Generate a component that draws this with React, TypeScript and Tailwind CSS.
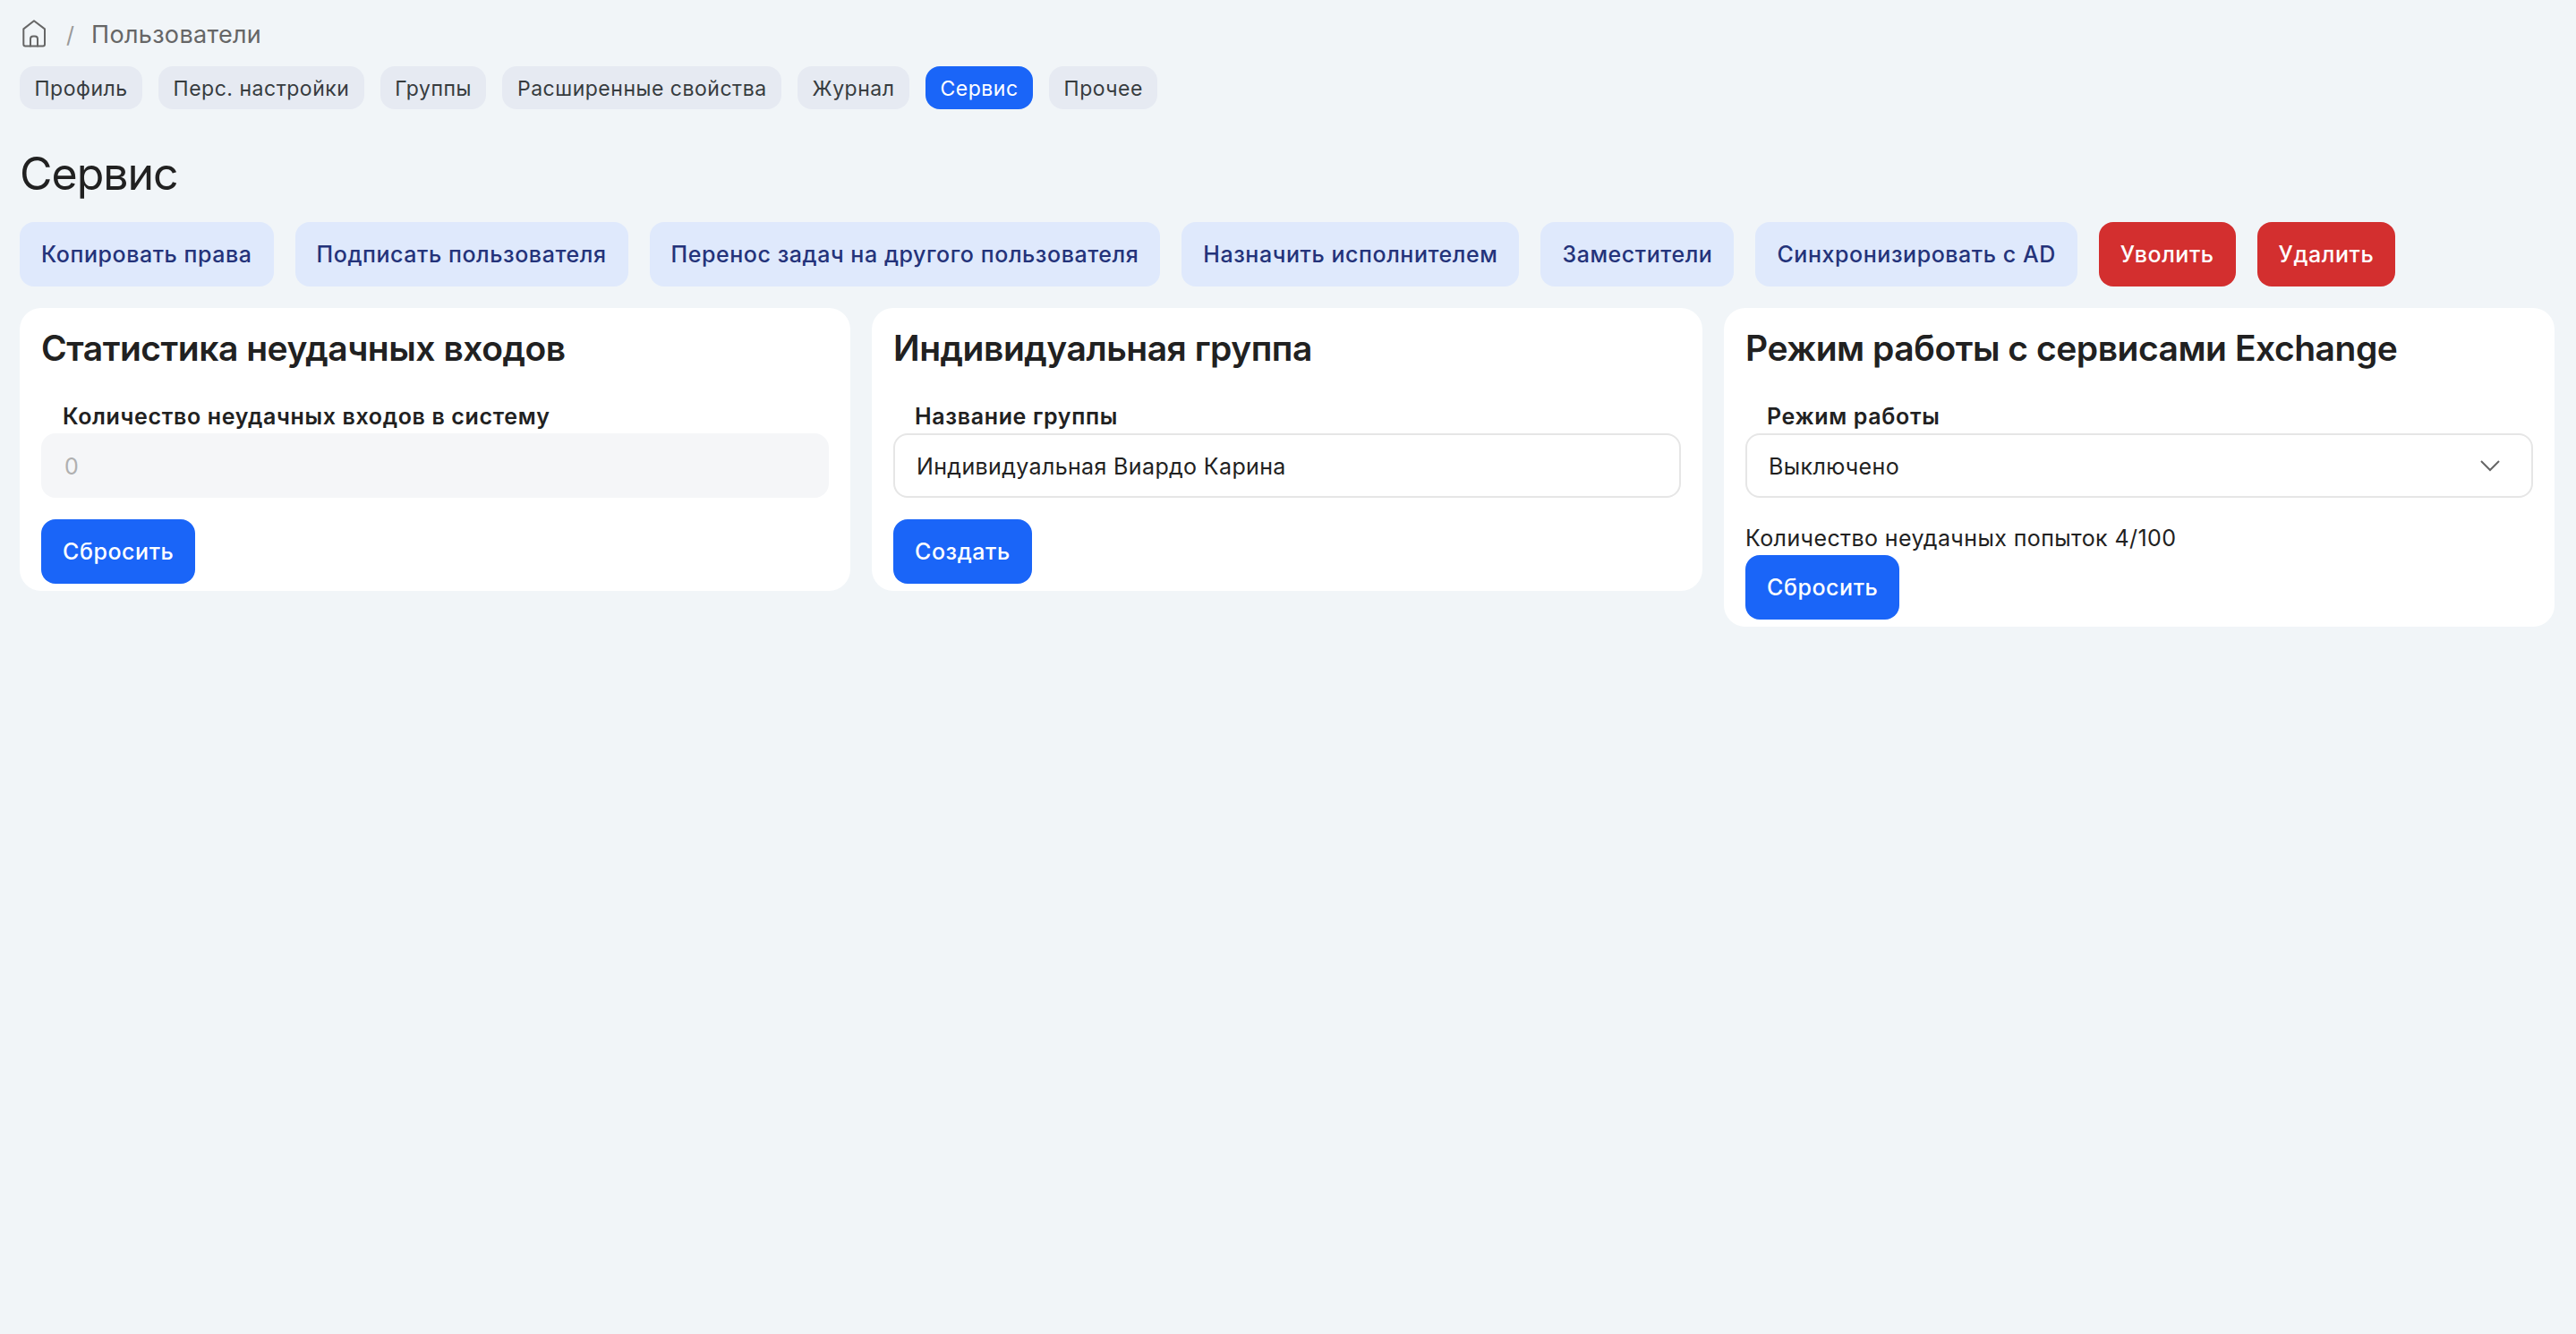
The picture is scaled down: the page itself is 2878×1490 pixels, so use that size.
import React, { useState } from "react";
import clsx from "clsx";

const tabs = [
  "Профиль",
  "Перс. настройки",
  "Группы",
  "Расширенные свойства",
  "Журнал",
  "Сервис",
  "Прочее",
];

const actions = [
  { label: "Копировать права" },
  { label: "Подписать пользователя" },
  { label: "Перенос задач на другого пользователя" },
  { label: "Назначить исполнителем" },
  { label: "Заместители" },
  { label: "Синхронизировать с AD" },
  { label: "Уволить", danger: true },
  { label: "Удалить", danger: true },
];

function HomeIcon() {
  return (
    <svg
      width="32"
      height="32"
      viewBox="0 0 32 32"
      fill="none"
      stroke="#666666"
      strokeWidth="2"
      strokeLinecap="round"
      strokeLinejoin="round"
    >
      <path d="M4.3 10.4 L16 1.3 L28 10.4 V27.4 a2 2 0 0 1 -2 2 H6.3 a2 2 0 0 1 -2 -2 Z" />
      <path d="M12 29.4 V21.6 a3 3 0 0 1 3 -3 h2 a3 3 0 0 1 3 3 V29.4" />
    </svg>
  );
}

function ChevronIcon() {
  return (
    <svg width="24" height="14" viewBox="0 0 24 14" fill="none" stroke="#666666" strokeWidth="2">
      <path d="M2 2 L12 12 L22 2" />
    </svg>
  );
}

type ButtonProps = {
  variant: "primary" | "light" | "danger";
  children: React.ReactNode;
};

function Button({ variant, children }: ButtonProps) {
  return (
    <button
      type="button"
      className={clsx(
        "block h-18 shrink-0 rounded-2xl px-6 pt-0.5 text-[25px] font-medium tracking-[0.56px] whitespace-nowrap",
        variant === "primary" && "bg-[#1a65f8] text-white",
        variant === "light" && "bg-[#dfe9fc] text-[#24337a]",
        variant === "danger" && "bg-[#d32f2f] text-white"
      )}
    >
      {children}
    </button>
  );
}

type CardProps = {
  title: string;
  label: string;
  children: React.ReactNode;
};

function Card({ title, label, children }: CardProps) {
  return (
    <section className="rounded-3xl bg-white px-6 pt-5 pb-2">
      <h2 className="text-[39px] leading-[50px] font-semibold tracking-[-0.47px] whitespace-nowrap">
        {title}
      </h2>
      <div className="mt-8 pl-6 text-[25px] leading-[38px] font-semibold tracking-[0.65px] whitespace-nowrap">
        {label}
      </div>
      {children}
    </section>
  );
}

export default function App() {
  const [activeTab, setActiveTab] = useState("Сервис");
  const [groupName, setGroupName] = useState("Индивидуальная Виардо Карина");

  return (
    <div className="min-h-screen bg-[#f1f5f8] pt-4 pr-6 pl-[22px] font-[Inter,'Liberation_Sans',sans-serif] text-[#212121]">
      {/* Breadcrumbs */}
      <nav className="flex h-11 items-center">
        <HomeIcon />
        <span className="ml-[20px] w-[28px] pt-1 text-[25px] text-[#999999]">/</span>
        <span className="pt-0.5 text-[27px] tracking-[0.33px] text-[#666666]">Пользователи</span>
      </nav>

      {/* Tabs */}
      <div className="mt-3.5 flex gap-[18px]">
        {tabs.map((tab) => (
          <button
            key={tab}
            type="button"
            onClick={() => setActiveTab(tab)}
            className={clsx(
              "h-12 rounded-2xl px-[16.5px] pt-0.5 text-[23px] tracking-[0.51px] whitespace-nowrap",
              tab === activeTab ? "bg-[#1a65f8] text-white" : "bg-[#e6eaf2] text-[#373c3f]"
            )}
          >
            {tab}
          </button>
        ))}
      </div>

      <h1 className="mt-10 text-[50px] leading-[64px] tracking-[-1px]">Сервис</h1>

      {/* Actions */}
      <div className="mt-[22px] flex gap-6">
        {actions.map((action) => (
          <Button key={action.label} variant={action.danger ? "danger" : "light"}>
            {action.label}
          </Button>
        ))}
      </div>

      {/* Cards */}
      <div className="mt-6 grid grid-cols-3 items-start gap-6">
        <Card title="Статистика неудачных входов" label="Количество неудачных входов в систему">
          <input
            disabled
            value="0"
            className="mb-6 block h-18 w-full rounded-2xl bg-[#f5f6f8] px-[26px] pt-0.5 text-[25px] tracking-[0.4px] text-[#b0b0b0]"
          />
          <Button variant="primary">Сбросить</Button>
        </Card>

        <Card title="Индивидуальная группа" label="Название группы">
          <input
            value={groupName}
            onChange={(e) => setGroupName(e.target.value)}
            className="mb-6 block h-18 w-full rounded-2xl border-2 border-[#e6e6e6] bg-white px-6 pt-0.5 text-[25px] tracking-[0.36px] outline-none"
          />
          <Button variant="primary">Создать</Button>
        </Card>

        <Card title="Режим работы с сервисами Exchange" label="Режим работы">
          <div className="mb-6 flex h-18 items-center justify-between rounded-2xl border-2 border-[#e6e6e6] pr-[34px] pl-6 text-[25px] tracking-[0.36px]">
            <span className="pt-1">Выключено</span>
            <ChevronIcon />
          </div>
          <p className="pt-0.5 text-[25px] leading-[38px] tracking-[0.4px]">
            Количество неудачных попыток 4/100
          </p>
          <Button variant="primary">Сбросить</Button>
        </Card>
      </div>
    </div>
  );
}
